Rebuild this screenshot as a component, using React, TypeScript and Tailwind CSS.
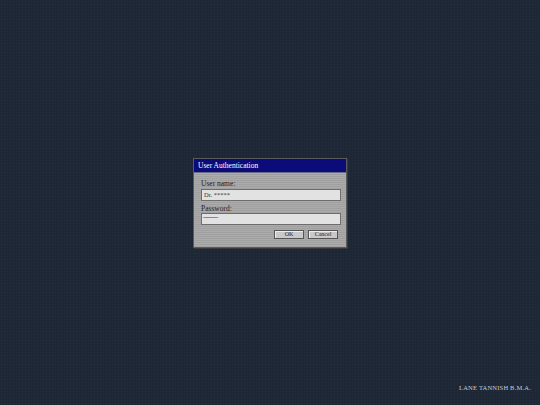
export default function App() {
  return (
    <div
      className="relative flex h-[405px] w-[540px] items-center justify-center bg-[#1e2735] bg-[radial-gradient(circle,#26303f_0.6px,transparent_0.8px)] bg-[length:3px_3px]"
      style={{ fontFamily: '"Liberation Serif", serif' }}
    >
      <div className="w-[154px] border border-[#5a5a5a] bg-[#a6a6a6] shadow-[1px_1px_0_#3a3a3a]">
        <div className="h-[14px] border-b border-[#6a6a8a] bg-[#0b0b7a] pl-[4px] text-[7.5px] leading-[14px] text-white">
          User Authentication
        </div>
        <div className="bg-[repeating-linear-gradient(180deg,#ababab_0px,#ababab_1px,#a0a0a0_1px,#a0a0a0_2px)] pb-[8px] pl-[7px] pr-[5px] pt-[6px] text-[7.5px] text-[#222]">
          <div className="leading-[10px]">User name:</div>
          <div className="h-[12px] border border-[#6d6d6d] bg-[#e2e2e2] pl-[2px] text-[6.5px] leading-[10px] text-[#333]">
            Dr. *****
          </div>
          <div className="mt-[3px] leading-[9px]">Password:</div>
          <div className="h-[12px] border border-[#6d6d6d] bg-[#e2e2e2] pl-[1px] text-[6px] leading-[7px] tracking-[-0.8px] text-[#333]">
            ------------
          </div>
          <div className="mt-[5px] flex justify-end gap-[4px] pr-[3px]">
            <div className="flex h-[9px] w-[30px] items-center justify-center border border-[#555] bg-[#c9c9c9] text-[6px] leading-none text-[#222] shadow-[inset_1px_1px_0_#eee]">
              OK
            </div>
            <div className="flex h-[9px] w-[30px] items-center justify-center border border-[#555] bg-[#c9c9c9] text-[6px] leading-none text-[#222] shadow-[inset_1px_1px_0_#eee]">
              Cancel
            </div>
          </div>
        </div>
      </div>
      <div className="absolute bottom-[12px] right-[9px] text-[6.5px] tracking-[0.2px] text-[#c8ccd4]">
        LANE TANNISH B.M.A.
      </div>
    </div>
  );
}
